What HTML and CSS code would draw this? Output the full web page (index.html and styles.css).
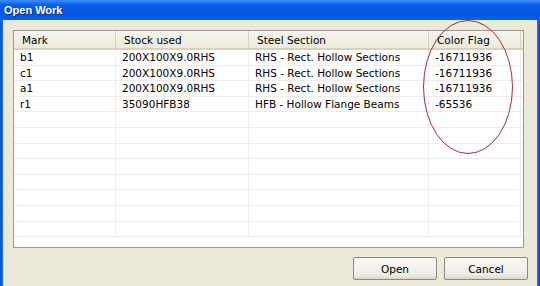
FILE: index.html
```html
<!DOCTYPE html>
<html lang="en">
<head>
    <meta charset="UTF-8">
    <title>Open Work</title>
    <link rel="stylesheet" href="styles.css">
</head>
<body>
    <div class="window">
        <div class="titlebar">Open Work</div>
        <div class="client">
            <div class="list">
                <div class="row head">
                    <div class="cell c-mark">Mark</div>
                    <div class="cell c-stock">Stock used</div>
                    <div class="cell c-steel">Steel Section</div>
                    <div class="cell c-flag">Color Flag</div>
                </div>
                <div class="row">
                    <div class="cell c-mark">b1</div>
                    <div class="cell c-stock">200X100X9.0RHS</div>
                    <div class="cell c-steel">RHS - Rect. Hollow Sections</div>
                    <div class="cell c-flag">-16711936</div>
                </div>
                <div class="row">
                    <div class="cell c-mark">c1</div>
                    <div class="cell c-stock">200X100X9.0RHS</div>
                    <div class="cell c-steel">RHS - Rect. Hollow Sections</div>
                    <div class="cell c-flag">-16711936</div>
                </div>
                <div class="row">
                    <div class="cell c-mark">a1</div>
                    <div class="cell c-stock">200X100X9.0RHS</div>
                    <div class="cell c-steel">RHS - Rect. Hollow Sections</div>
                    <div class="cell c-flag">-16711936</div>
                </div>
                <div class="row">
                    <div class="cell c-mark">r1</div>
                    <div class="cell c-stock">35090HFB38</div>
                    <div class="cell c-steel">HFB - Hollow Flange Beams</div>
                    <div class="cell c-flag">-65536</div>
                </div>
                <div class="row"><div class="cell c-mark"></div><div class="cell c-stock"></div><div class="cell c-steel"></div><div class="cell c-flag"></div></div>
                <div class="row"><div class="cell c-mark"></div><div class="cell c-stock"></div><div class="cell c-steel"></div><div class="cell c-flag"></div></div>
                <div class="row"><div class="cell c-mark"></div><div class="cell c-stock"></div><div class="cell c-steel"></div><div class="cell c-flag"></div></div>
                <div class="row"><div class="cell c-mark"></div><div class="cell c-stock"></div><div class="cell c-steel"></div><div class="cell c-flag"></div></div>
                <div class="row"><div class="cell c-mark"></div><div class="cell c-stock"></div><div class="cell c-steel"></div><div class="cell c-flag"></div></div>
                <div class="row"><div class="cell c-mark"></div><div class="cell c-stock"></div><div class="cell c-steel"></div><div class="cell c-flag"></div></div>
                <div class="row"><div class="cell c-mark"></div><div class="cell c-stock"></div><div class="cell c-steel"></div><div class="cell c-flag"></div></div>
                <div class="row"><div class="cell c-mark"></div><div class="cell c-stock"></div><div class="cell c-steel"></div><div class="cell c-flag"></div></div>
            </div>
            <div class="buttons">
                <button class="btn">Open</button>
                <button class="btn">Cancel</button>
            </div>

            <!-- hand drawn circle round the flag column -->
            <svg class="mark-ring" width="96" height="140" viewBox="0 0 96 140">
                <ellipse cx="48" cy="68" rx="44.5" ry="66.5" fill="none" stroke="#a3294f" stroke-width="1"/>
            </svg>
        </div>
    </div>
</body>
</html>
```

FILE: styles.css
```css
body {
    margin: 0;
    padding: 0;
    font-family: 'DejaVu Sans', Tahoma, sans-serif;
    font-size: 10.5px;
    color: #000;
    background-color: #0a53d8;
}
.window {
    width: 540px;
    height: 286px;
    display: flex;
    flex-direction: column;
    background: linear-gradient(to right, #0b4fd2 0, #1f6ff0 3px, #1f6ff0 537px, #0b4fd2 540px);
}
.titlebar {
    height: 20px;
    line-height: 20px;
    padding-left: 4px;
    color: #fff;
    font-family: 'Liberation Sans', Arial, sans-serif;
    font-weight: bold;
    font-size: 11px;
    text-shadow: 1px 1px 0 #0a2f8c;
    background: linear-gradient(to bottom, #3b8cf6 0, #0a5ee8 5px, #0554e2 14px, #0a5fe6 20px);
}
.client {
    position: relative;
    flex: 1;
    margin: 0 3px;
    background-color: #ece9d8;
    padding: 10px 11px 0 10px;
    display: flex;
    flex-direction: column;
}
.list {
    width: 509px;
    height: 216px;
    border: 1px solid #9c9a94;
    background-color: #fff;
    overflow: hidden;
}
.row {
    display: flex;
    height: 15.6px;
    border-bottom: 1px solid #eeede8;
    box-sizing: border-box;
}
.row.head {
    height: 19px;
    background: linear-gradient(to bottom, #f6f5ef, #ebeadb);
    border-bottom: 2px solid #d6d2c2;
}
.cell {
    box-sizing: border-box;
    padding-left: 6px;
    line-height: 15px;
    white-space: nowrap;
    border-right: 1px solid #f0efea;
}
.head .cell {
    line-height: 18px;
    padding-left: 8px;
    border-right: 1px solid #d6d2c2;
}
.c-mark { width: 102px; }
.c-stock { width: 133px; }
.c-steel { width: 180px; }
.c-flag { width: 92px; }
.mark-ring {
    position: absolute;
    left: 417px;
    top: -1px;
}
.buttons {
    display: flex;
    justify-content: flex-end;
    gap: 7px;
    margin-top: 9px;
    margin-right: -2px;
}
.btn {
    width: 84px;
    height: 23px;
    font-family: 'DejaVu Sans', Tahoma, sans-serif;
    font-size: 10.5px;
    color: #000;
    border: 1px solid #8b8a82;
    border-radius: 2px;
    background: linear-gradient(to bottom, #fbfaf6, #ecebe4 80%, #d9d7cc);
}
```
